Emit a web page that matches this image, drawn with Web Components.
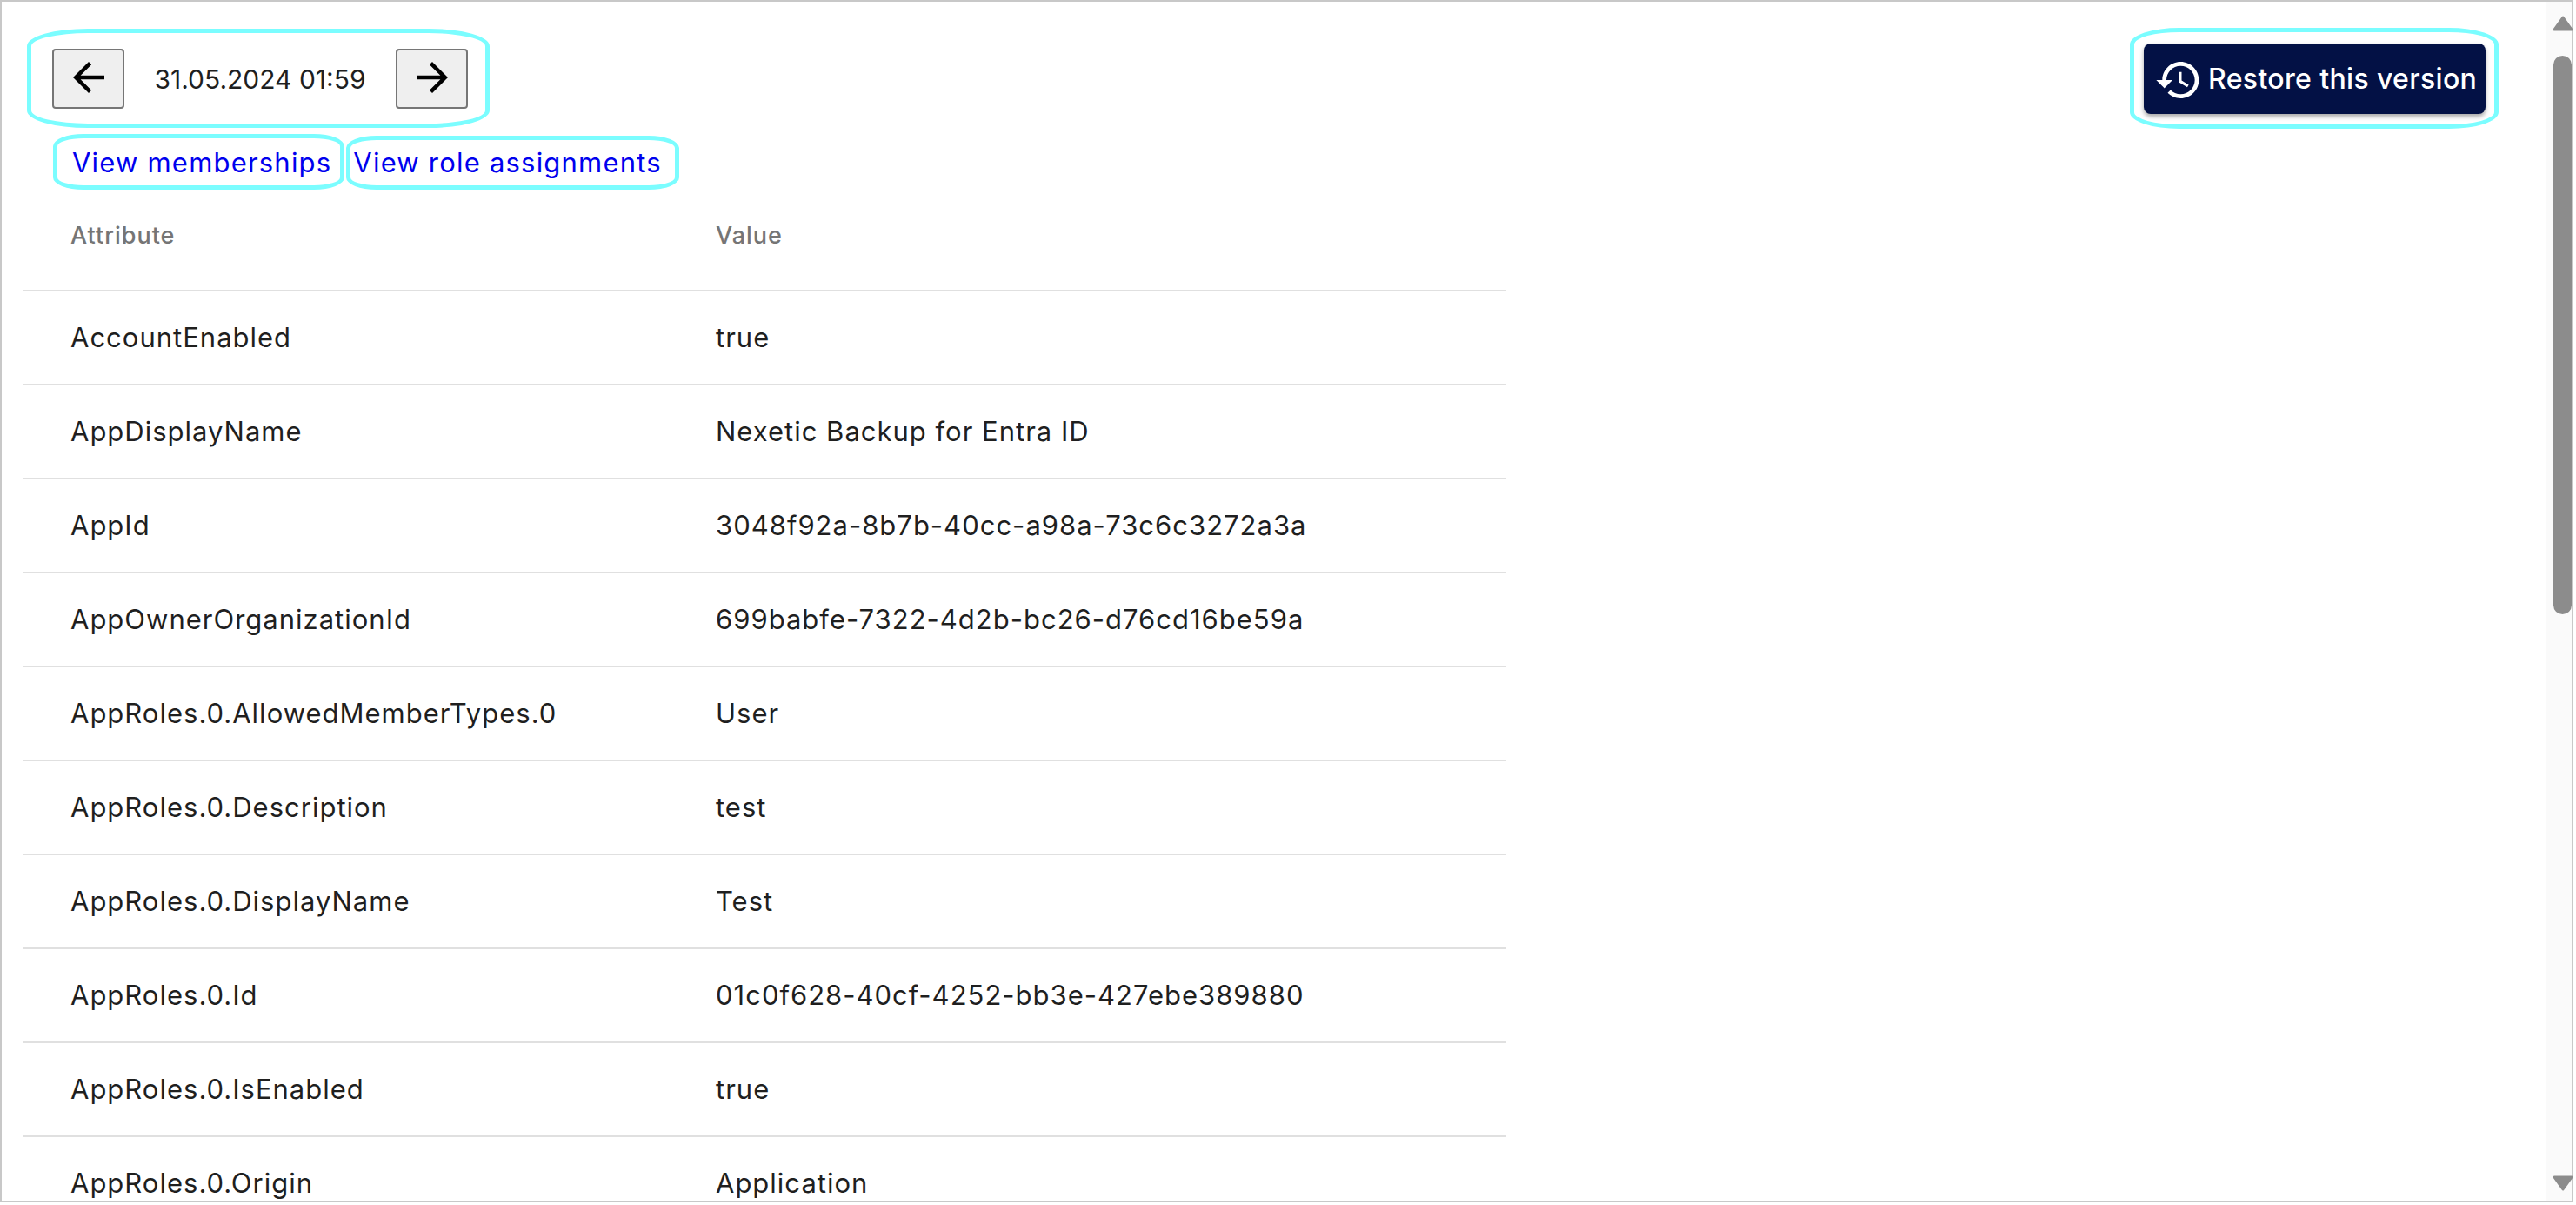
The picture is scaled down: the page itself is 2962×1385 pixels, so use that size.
<!DOCTYPE html>
<html>
<head>
<meta charset="utf-8">
<title>Version</title>
<style>
  html, body { margin: 0; height: 100%; background: #fff; overflow: hidden; }
  body { font-family: Inter, "Liberation Sans", sans-serif; color: #1f1f1f; }
</style>
</head>
<body>
<app-frame>
  <app-toolbar>
    <app-ring style="--t:-23px;--r:-25px;--b:-22px;--l:-29px;--rx:70px;--ry:20px">
      <app-version-nav date="31.05.2024 01:59"></app-version-nav>
    </app-ring>
    <app-ring slot="end" style="--t:-18px;--r:-15px;--b:-17px;--l:-16px;--rx:57px;--ry:19px">
      <app-restore-button>Restore this version</app-restore-button>
    </app-ring>
  </app-toolbar>
  <app-links>
    <app-ring style="--t:-14px;--r:-15px;--b:-13px;--l:-22px;--rx:35px;--ry:14px"><app-link>View memberships</app-link></app-ring>
    <app-ring style="--t:-12px;--r:-20px;--b:-13px;--l:-8px;--rx:35px;--ry:14px"><app-link>View role assignments</app-link></app-ring>
  </app-links>
  <app-attr-table>
    <app-attr-row name="AccountEnabled" value="true"></app-attr-row>
    <app-attr-row name="AppDisplayName" value="Nexetic Backup for Entra ID"></app-attr-row>
    <app-attr-row name="AppId" value="3048f92a-8b7b-40cc-a98a-73c6c3272a3a"></app-attr-row>
    <app-attr-row name="AppOwnerOrganizationId" value="699babfe-7322-4d2b-bc26-d76cd16be59a"></app-attr-row>
    <app-attr-row name="AppRoles.0.AllowedMemberTypes.0" value="User"></app-attr-row>
    <app-attr-row name="AppRoles.0.Description" value="test"></app-attr-row>
    <app-attr-row name="AppRoles.0.DisplayName" value="Test"></app-attr-row>
    <app-attr-row name="AppRoles.0.Id" value="01c0f628-40cf-4252-bb3e-427ebe389880"></app-attr-row>
    <app-attr-row name="AppRoles.0.IsEnabled" value="true"></app-attr-row>
    <app-attr-row name="AppRoles.0.Origin" value="Application"></app-attr-row>
  </app-attr-table>
</app-frame>

<script>
// Moldura da pagina com a barra de rolagem
class AppFrame extends HTMLElement {
  constructor() {
    super();
    this.attachShadow({ mode: 'open' });
  }
  connectedCallback() {
    this.shadowRoot.innerHTML = `
      <style>
        :host {
          display: flex;
          box-sizing: border-box;
          height: 1382px;
          width: 2959px;
          border: 2px solid #c8c8c8;
        }
        .main { flex: 1; min-width: 0; padding: 48px 0 0 24px; overflow: hidden; }
      </style>
      <div class="main"><slot></slot></div>
      <app-scrollbar></app-scrollbar>
    `;
  }
}

class AppScrollbar extends HTMLElement {
  constructor() {
    super();
    this.attachShadow({ mode: 'open' });
  }
  connectedCallback() {
    this.shadowRoot.innerHTML = `
      <style>
        :host {
          flex: none;
          width: 30px;
          background: #fafafa;
          display: flex;
          flex-direction: column;
          align-items: flex-end;
        }
        svg { display: block; width: 24px; height: 18px; margin-right: -2px; }
        .up { margin-top: 16px; }
        .thumb {
          width: 21px;
          height: 642px;
          margin-top: 28px;
          border-radius: 11px;
          background: #8c8c8c;
        }
        .down { margin-top: auto; margin-bottom: 11px; }
      </style>
      <svg class="up" viewBox="0 0 24 18"><path d="M12 2 L22 16 H2 Z" fill="#8c8c8c" stroke="#8c8c8c" stroke-width="3" stroke-linejoin="round"/></svg>
      <div class="thumb"></div>
      <svg class="down" viewBox="0 0 24 18"><path d="M12 16 L22 2 H2 Z" fill="#8c8c8c" stroke="#8c8c8c" stroke-width="3" stroke-linejoin="round"/></svg>
    `;
  }
}

// Anel ciano de destaque por cima do conteudo
class AppRing extends HTMLElement {
  constructor() {
    super();
    this.attachShadow({ mode: 'open' });
  }
  connectedCallback() {
    this.shadowRoot.innerHTML = `
      <style>
        :host { display: inline-flex; position: relative; }
        .ring {
          position: absolute;
          top: var(--t); right: var(--r); bottom: var(--b); left: var(--l);
          border: 5px solid #7bfdff;
          border-radius: var(--rx) / var(--ry);
          pointer-events: none;
        }
      </style>
      <slot></slot>
      <div class="ring"></div>
    `;
  }
}

class AppToolbar extends HTMLElement {
  constructor() {
    super();
    this.attachShadow({ mode: 'open' });
  }
  connectedCallback() {
    this.shadowRoot.innerHTML = `
      <style>
        :host {
          display: flex;
          align-items: center;
          justify-content: space-between;
          height: 81px;
          padding: 0 69px 0 34px;
        }
      </style>
      <slot></slot>
      <slot name="end"></slot>
    `;
  }
}

class AppVersionNav extends HTMLElement {
  constructor() {
    super();
    this.attachShadow({ mode: 'open' });
  }
  connectedCallback() {
    const date = this.getAttribute('date');
    const arrow = d => `<svg viewBox="0 0 24 24" width="54" height="54"><path d="${d}"/></svg>`;
    this.shadowRoot.innerHTML = `
      <style>
        :host { display: flex; align-items: center; }
        button {
          box-sizing: border-box;
          width: 83px;
          height: 69px;
          padding: 0;
          display: flex;
          align-items: center;
          justify-content: center;
          background: #efefef;
          border: 2px solid #767676;
          border-radius: 4px;
        }
        svg { display: block; fill: #000; margin-top: -4px; }
        .date { width: 312px; text-align: center; font-size: 30px; color: #1f1f1f; }
      </style>
      <button>${arrow('M20 11H7.83l5.59-5.59L12 4l-8 8 8 8 1.41-1.41L7.83 13H20v-2z')}</button>
      <span class="date">${date}</span>
      <button>${arrow('M4 13h12.17l-5.59 5.59L12 20l8-8-8-8-1.41 1.41L16.17 11H4v2z')}</button>
    `;
  }
}

class AppRestoreButton extends HTMLElement {
  constructor() {
    super();
    this.attachShadow({ mode: 'open' });
  }
  connectedCallback() {
    this.shadowRoot.innerHTML = `
      <style>
        :host { display: block; }
        button {
          box-sizing: border-box;
          width: 393px;
          height: 81px;
          padding: 0 0 0 12px;
          display: flex;
          align-items: center;
          gap: 6px;
          border: 0;
          border-radius: 8px;
          background: #031145;
          color: #fff;
          font: 500 32px Inter, "Liberation Sans", sans-serif;
          letter-spacing: 0.35px;
          box-shadow: 0 3px 5px rgba(0,0,0,0.35);
          white-space: nowrap;
        }
        svg { display: block; flex: none; fill: #fff; margin-top: 2px; }
      </style>
      <button>
        <svg viewBox="0 0 24 24" width="56" height="56"><path d="M13 3c-4.97 0-9 4.03-9 9H1l3.89 3.89.07.14L9 12H6c0-3.87 3.13-7 7-7s7 3.13 7 7-3.13 7-7 7c-1.93 0-3.68-.79-4.94-2.06l-1.42 1.42C8.27 19.99 10.51 21 13 21c4.97 0 9-4.03 9-9s-4.03-9-9-9zm-1 5v5l4.28 2.54.72-1.21-3.5-2.08V8H12z"/></svg>
        <span><slot></slot></span>
      </button>
    `;
  }
}

class AppLinks extends HTMLElement {
  constructor() {
    super();
    this.attachShadow({ mode: 'open' });
  }
  connectedCallback() {
    this.shadowRoot.innerHTML = `
      <style>
        :host { display: flex; gap: 25px; padding: 33px 0 0 57px; height: 44px; align-items: center; }
      </style>
      <slot></slot>
    `;
  }
}

class AppLink extends HTMLElement {
  constructor() {
    super();
    this.attachShadow({ mode: 'open' });
  }
  connectedCallback() {
    this.shadowRoot.innerHTML = `
      <style>
        :host { display: block; }
        a { color: #0000ee; text-decoration: none; font-size: 31px; letter-spacing: 1.2px; white-space: nowrap; }
      </style>
      <a href="#"><slot></slot></a>
    `;
  }
}

class AppAttrTable extends HTMLElement {
  constructor() {
    super();
    this.attachShadow({ mode: 'open' });
  }
  connectedCallback() {
    this.shadowRoot.innerHTML = `
      <style>
        :host { display: block; width: 1706px; }
        .head {
          display: grid;
          grid-template-columns: 742px 1fr;
          box-sizing: border-box;
          height: 127px;
          padding: 46px 0 0 55px;
          border-bottom: 2px solid #e0e0e0;
          font-size: 27px;
          font-weight: 500;
          letter-spacing: 1px;
          color: #757575;
        }
      </style>
      <div class="head"><span>Attribute</span><span>Value</span></div>
      <slot></slot>
    `;
  }
}

class AppAttrRow extends HTMLElement {
  constructor() {
    super();
    this.attachShadow({ mode: 'open' });
  }
  connectedCallback() {
    this.shadowRoot.innerHTML = `
      <style>
        :host {
          display: grid;
          grid-template-columns: 742px 1fr;
          align-items: center;
          box-sizing: border-box;
          height: 108px;
          padding: 0 0 2px 55px;
          border-bottom: 2px solid #e0e0e0;
          font-size: 31px;
          letter-spacing: 1px;
          color: #1f1f1f;
        }
      </style>
      <span>${this.getAttribute('name')}</span>
      <span>${this.getAttribute('value')}</span>
    `;
  }
}

customElements.define('app-frame', AppFrame);
customElements.define('app-scrollbar', AppScrollbar);
customElements.define('app-ring', AppRing);
customElements.define('app-toolbar', AppToolbar);
customElements.define('app-version-nav', AppVersionNav);
customElements.define('app-restore-button', AppRestoreButton);
customElements.define('app-links', AppLinks);
customElements.define('app-link', AppLink);
customElements.define('app-attr-table', AppAttrTable);
customElements.define('app-attr-row', AppAttrRow);
</script>
</body>
</html>
